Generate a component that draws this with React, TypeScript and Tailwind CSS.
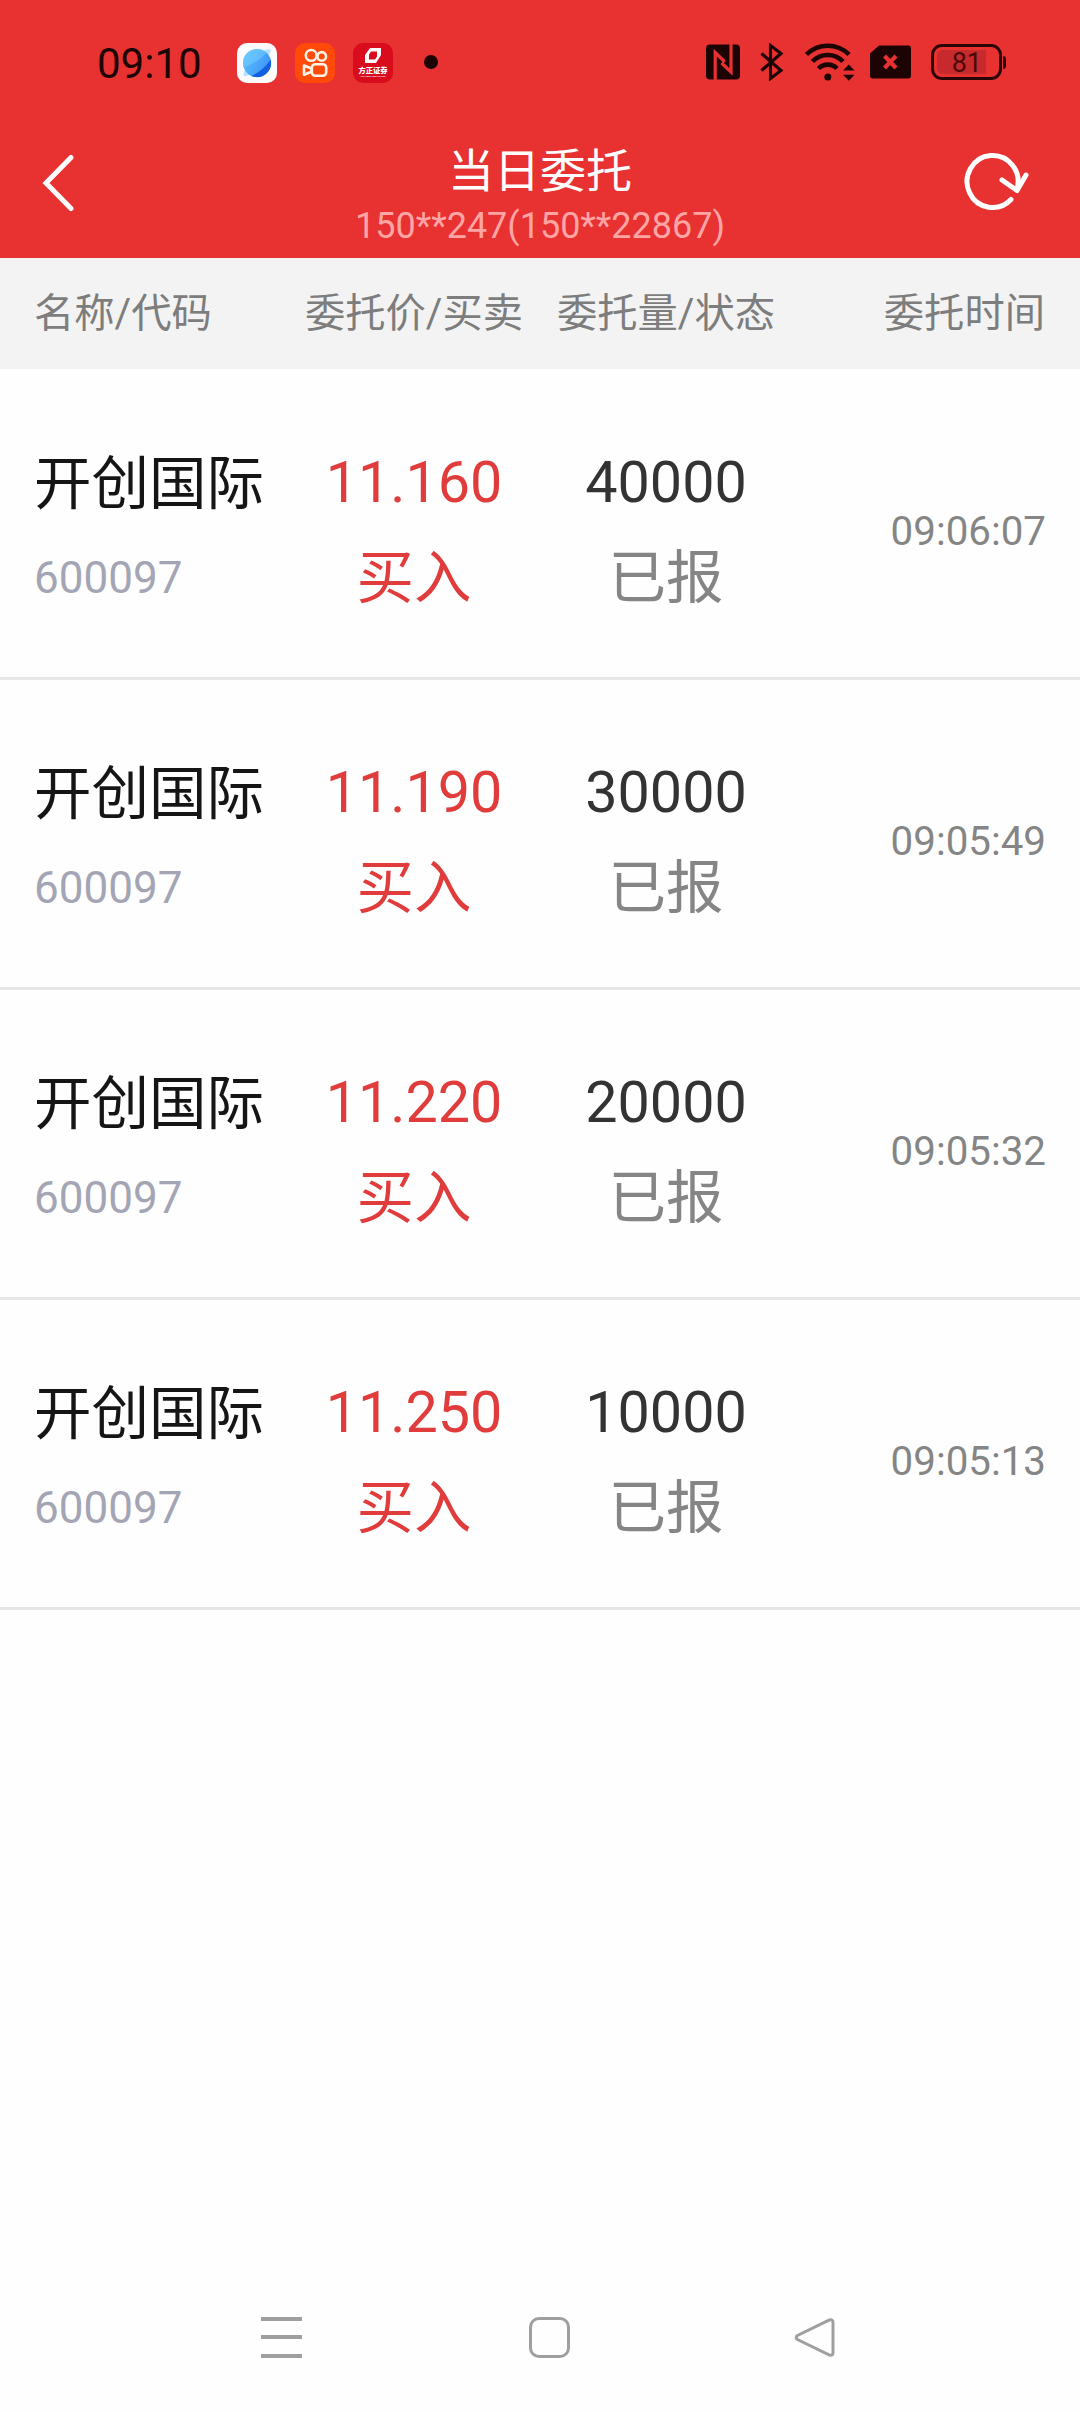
const ORDERS = [
  { name: "开创国际", code: "600097", price: "11.160", side: "买入", qty: "40000", status: "已报", time: "09:06:07" },
  { name: "开创国际", code: "600097", price: "11.190", side: "买入", qty: "30000", status: "已报", time: "09:05:49" },
  { name: "开创国际", code: "600097", price: "11.220", side: "买入", qty: "20000", status: "已报", time: "09:05:32" },
  { name: "开创国际", code: "600097", price: "11.250", side: "买入", qty: "10000", status: "已报", time: "09:05:13" },
];

function BrowserIcon() {
  return (
    <svg viewBox="0 0 40 40" className="h-10 w-10">
      <defs>
        <linearGradient id="planet" x1="0" y1="0.2" x2="1" y2="0.8">
          <stop offset="0" stopColor="#5ac4ff" />
          <stop offset="1" stopColor="#3b8df5" />
        </linearGradient>
      </defs>
      <rect width="40" height="40" rx="10" fill="#fbfbfd" />
      <ellipse cx="20" cy="19.5" rx="18.5" ry="5" fill="#b5e2ff" transform="rotate(-45 20 19.5)" />
      <circle cx="20" cy="20" r="14" fill="url(#planet)" />
      <path d="M33.6 16.5A14 14 0 0 1 14.5 32.9C22 29.5 29.5 23.5 33.6 16.5Z" fill="#1160e0" />
      <path d="M6.5 24C14 23 25 15 29.5 9.8C24 5 17 5 12 8.5C7 12 5 18 6.5 24Z" fill="#7fd0ff" opacity="0.45" />
    </svg>
  );
}

function VideoIcon() {
  return (
    <svg viewBox="0 0 40 40" className="h-10 w-10">
      <rect width="40" height="40" rx="10" fill="#ff4a0a" />
      <g fill="none" stroke="#fff3e6" strokeWidth="2.6" strokeLinejoin="round">
        <circle cx="16.2" cy="12.4" r="5.4" />
        <circle cx="26.7" cy="13.4" r="4.3" />
        <rect x="16.8" y="21.2" width="14.4" height="11.6" rx="3.5" />
        <path d="M16.5 25.5L9 22.5V31.7L16.5 28.8Z" />
      </g>
    </svg>
  );
}

function BrokerIcon() {
  return (
    <div className="flex h-10 w-10 flex-col items-center rounded-[10px] bg-[#d80c1c] pt-[5px] text-white">
      <svg viewBox="0 0 16 15" className="h-[15px] w-4">
        <path fillRule="evenodd" d="M5 0H16V7L11 15H0V7ZM6 3.5L4 6.5V11.5H10L12 8.5V3.5Z" fill="#fff" />
      </svg>
      <span className="mt-[3px] whitespace-nowrap text-[7.3px] font-black leading-[9px]">方正证券</span>
      <span className="whitespace-nowrap text-[2.5px] leading-[3px]">FOUNDER SECURITIES</span>
    </div>
  );
}

function StatusBar() {
  return (
    <div className="flex h-[124px] items-center pl-[97px] pr-[74px] text-[#1c0404]">
      <span className="w-[140px] pt-[3px] text-[42px] leading-none">09:10</span>
      <div className="flex gap-[18px] pt-[2px]">
        <BrowserIcon />
        <VideoIcon />
        <BrokerIcon />
      </div>
      <span className="ml-[31px] h-[14px] w-[14px] rounded-full bg-[#1c0404]" />

      <div className="ml-auto flex items-center">
        {/* NFC */}
        <svg viewBox="0 0 34 36" className="h-9 w-[34px]">
          <rect y="0.5" width="34" height="35" rx="4" fill="#1c0404" />
          <path d="M9.2 36V8.5L18.5 17.5M25 0V28L15.5 19" fill="none" stroke="#e83131" strokeWidth="3.2" />
          <path d="M15.5 13.5L19.5 17.3L15.5 21.5L17 18Z" fill="#e83131" />
        </svg>
        {/* Bluetooth */}
        <svg viewBox="0 0 24 38" className="ml-[20px] h-[38px] w-6">
          <path d="M1.5 10.5L21 27.5L10.5 35.5V2.5L21 10.5L1.5 27.5" fill="none" stroke="#1c0404" strokeWidth="3.1" />
        </svg>
        {/* WLAN */}
        <svg viewBox="0 0 50 38" className="ml-[21px] h-[38px] w-[50px]">
          <g fill="none" stroke="#1c0404" strokeWidth="4.6">
            <path d="M1.5 11.5A30 30 0 0 1 44 11.5" />
            <path d="M7.5 18.5A21 21 0 0 1 38 18.5" />
            <path d="M13.5 25.5A13 13 0 0 1 32 25.5" />
          </g>
          <circle cx="22.8" cy="34" r="3.5" fill="#1c0404" />
          <path d="M38 27.5L43.8 21.5L49.5 27.5ZM38 31.8L43.8 37.8L49.5 31.8Z" fill="#1c0404" />
        </svg>
        {/* SIM without service */}
        <svg viewBox="0 0 41 34" className="ml-[15px] mr-[2px] h-[34px] w-[41px]">
          <path d="M9 0.5H38Q41 0.5 41 3.5V30.5Q41 33.5 38 33.5H3Q0 33.5 0 30.5V8.5Z" fill="#1c0404" />
          <path d="M14.5 11L26 23M26 11L14.5 23" stroke="#e83131" strokeWidth="4.2" />
        </svg>
        {/* Battery */}
        <div className="ml-[18px] flex items-center gap-px">
          <div className="flex h-9 w-[71px] rounded-[11px] border-[3px] border-[#2a0505] p-[3px]">
            <div className="flex w-[49px] items-center justify-end rounded-l-[6px] bg-[#c62a2c] pr-[4px] pt-[2px] text-[27px] leading-none text-[#4c0808]">
              81
            </div>
          </div>
          <span className="h-[13px] w-[3px] rounded-r-[3px] bg-[#2a0505]" />
        </div>
      </div>
    </div>
  );
}

function TitleBar() {
  return (
    <div className="grid h-[134px] grid-cols-[1fr_auto_1fr] items-start text-white">
      <svg viewBox="0 0 34 58" className="ml-[41px] mt-[30px] h-[58px] w-[34px]">
        <path d="M30 3.5L5 29L30 54.5" fill="none" stroke="#fff" strokeWidth="5" strokeLinecap="round" />
      </svg>
      <div className="flex flex-col items-center pt-[18px]">
        <h1 className="text-[46px] leading-[58px]">当日委托</h1>
        <p className="text-[36px] leading-[52px] text-[#ffa5a5]">150**247(150**22867)</p>
      </div>
      <svg viewBox="0 0 68 60" className="mr-[49px] mt-[29px] h-[60px] w-[68px] justify-self-end">
        <g fill="none" stroke="#fff" strokeWidth="5" strokeLinecap="round" strokeLinejoin="round">
          <path d="M48 46.5A25.5 26 0 1 1 54 36" />
          <path d="M39 27L54 37.5L63 22" />
        </g>
      </svg>
    </div>
  );
}

function NavBar() {
  return (
    <div className="mt-auto flex h-[150px] items-center pl-[261px]">
      <div className="flex h-[41px] w-[41px] flex-col justify-between">
        <span className="h-1 bg-[#9f9f9f]" />
        <span className="h-1 bg-[#9f9f9f]" />
        <span className="h-1 bg-[#9f9f9f]" />
      </div>
      <div className="ml-[227px] h-[41px] w-[41px] rounded-[10px] border-[3px] border-[#9f9f9f]" />
      <svg viewBox="0 0 41 41" className="ml-[224px] h-[41px] w-[41px]">
        <path d="M35.5 2.9L3.5 18.5Q0.8 20.5 3.5 22.5L35.5 38.1Q39 39 39 35.5V5.5Q39 2 35.5 2.9Z" fill="none" stroke="#9f9f9f" strokeWidth="3" />
      </svg>
    </div>
  );
}

export default function App() {
  return (
    <div className="flex h-[2412px] w-[1080px] flex-col overflow-hidden bg-[#fefefe] font-[Roboto,'Noto_Sans_CJK_SC',sans-serif]">
      <header className="bg-[#e83131]">
        <StatusBar />
        <TitleBar />
      </header>

      <div className="mb-px grid h-[111px] grid-cols-[254px_252px_252px_1fr] items-center bg-[#f3f3f3] pl-[34px] pr-[35px] pt-[2px] text-[40.3px] leading-none text-[#7d7d7d]">
        <span>名称/代码</span>
        <span className="text-center">委托价/买卖</span>
        <span className="text-center">委托量/状态</span>
        <span className="text-right">委托时间</span>
      </div>

      {ORDERS.map((o) => (
        <div
          key={o.time}
          className="grid h-[310px] grid-cols-[254px_252px_252px_1fr] border-b-[3px] border-[#e6e6e6] pl-[34px] pr-[34px] pt-[81px] text-[57.5px] leading-[64px]"
        >
          <div className="flex flex-col pt-[2px]">
            <span className="mb-[29px] text-[#151515]">{o.name}</span>
            <span className="text-[44px] text-[#a4a5b4]">{o.code}</span>
          </div>
          <div className="flex flex-col items-center gap-8 text-[#e03c3c]">
            <span>{o.price}</span>
            <span>{o.side}</span>
          </div>
          <div className="flex flex-col items-center gap-8">
            <span className="text-[#333333]">{o.qty}</span>
            <span className="text-[#858585]">{o.status}</span>
          </div>
          <span className="h-[160px] text-right text-[40.3px] leading-[162px] text-[#858585]">{o.time}</span>
        </div>
      ))}

      <NavBar />
    </div>
  );
}
